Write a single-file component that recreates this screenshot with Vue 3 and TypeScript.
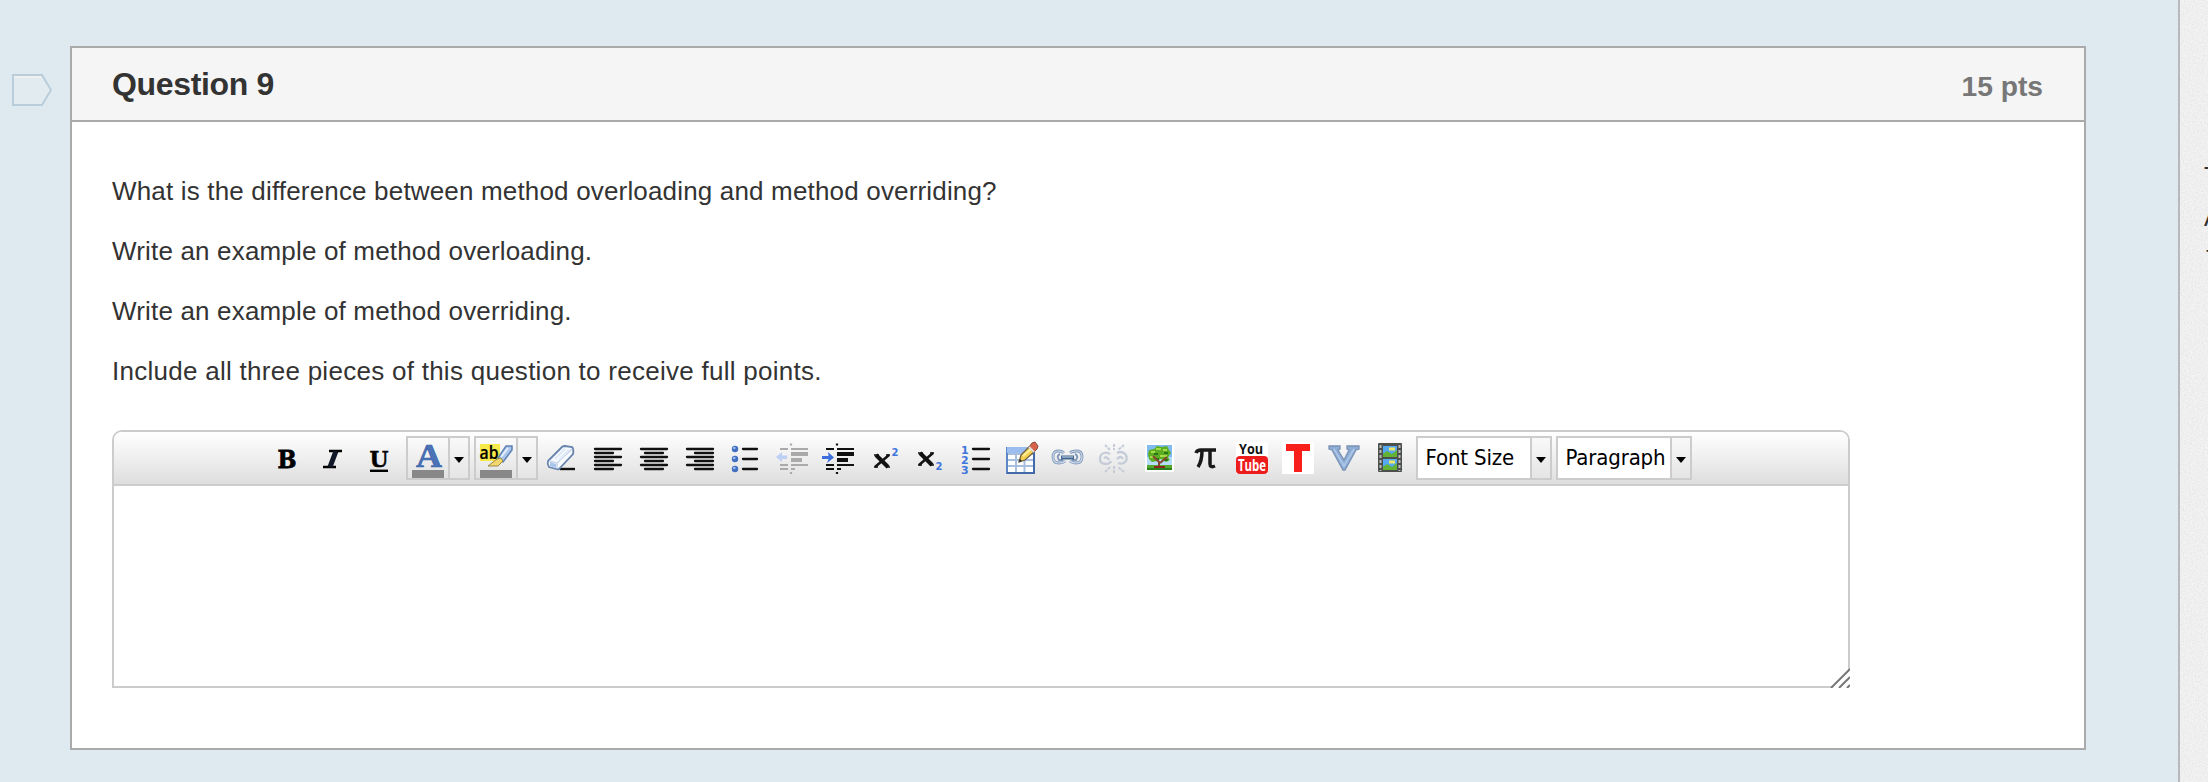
<script setup lang="ts">
const paragraphs: string[] = [
  'What is the difference between method overloading and method overriding?',
  'Write an example of method overloading.',
  'Write an example of method overriding.',
  'Include all three pieces of this question to receive full points.',
]
const lineY: number[] = [7, 11, 15, 19, 23, 27]
const listY: number[] = [7, 17, 27]
const alignments: { name: string; full: number; start: number }[] = [
  { name: 'left', full: 2, start: 2 },
  { name: 'center', full: 2, start: 6 },
  { name: 'right', full: 2, start: 10 },
]
</script>

<template>
  <div class="page">
    <main class="content">
      <svg class="flag" viewBox="0 0 42 34" aria-hidden="true">
        <path d="M2 2H31L40 17 31 32H2Z" fill="#e2ebf0" stroke="#b9cddb" stroke-width="2" />
        <path d="M3 4H30" stroke="#f1f0ee" stroke-width="2" />
      </svg>
      <section class="card">
        <header class="card-head">
          <h1><span>Question 9</span></h1>
          <span class="points">15 pts</span>
        </header>
        <div class="card-body">
          <p v-for="(text, i) in paragraphs" :key="i" :class="'line' + i">{{ text }}</p>
          <div class="editor">
            <div class="toolbar">
              <span class="cell"><svg viewBox="0 0 32 32"><text x="6.500" y="25.500" class="serif" font-size="24.500" textLength="19" lengthAdjust="spacingAndGlyphs" stroke="#000" stroke-width=".8">B</text></svg></span>
              <span class="cell"><svg viewBox="0 0 32 32"><path d="M12 9H25M6 25H19" stroke="#000" stroke-width="2.500" /><path d="M19 9 13 25" stroke="#111827" stroke-width="5" /></svg></span>
              <span class="cell"><svg viewBox="0 0 32 32"><text x="6.500" y="24.500" class="serif" font-size="23" textLength="19" lengthAdjust="spacingAndGlyphs" stroke="#000" stroke-width=".5">U</text><path d="M7 28.800H25" stroke="#000" stroke-width="2.400" /></svg></span>

              <span class="split first">
                <span class="swatch">
                  <svg viewBox="0 0 40 40">
                    <text x="8" y="28.500" class="serif-a" font-size="33" textLength="26" lengthAdjust="spacingAndGlyphs">A</text>
                    <rect x="4" y="32" width="32" height="8" fill="#888" />
                  </svg>
                </span>
                <span class="arrow"><i></i></span>
              </span>
              <span class="split">
                <span class="swatch">
                  <svg viewBox="0 0 40 40">
                    <rect x="4" y="6" width="20" height="17" fill="#f8e94a" />
                    <path d="M22 20 30 8 36 8 36 12 27 24Z" fill="#a9c5ea" stroke="#5f82b4" stroke-width="1.500" />
                    <path d="M25 19 32 10" stroke="#e4effb" stroke-width="2" />
                    <path d="M21 21 25 20 27 23 22 28 12 28Z" fill="#f2d66e" stroke="#9b8b45" />
                    <text x="3.500" y="20.500" font-size="18" class="sans" textLength="19" lengthAdjust="spacingAndGlyphs" stroke="#000" stroke-width=".2">ab</text>
                    <rect x="4" y="32" width="32" height="8" fill="#888" />
                  </svg>
                </span>
                <span class="arrow"><i></i></span>
              </span>

              <span class="cell after-split"><svg viewBox="0 0 32 32">
                <path d="M14 27H29" stroke="#111" stroke-width="2.400" />
                <path d="M2 19 16 5Q17 4 19 4L26 5Q28 7 27 12L14 26Q13 28 10 27L3 25Q1 22 2 19Z" fill="#f7faff" stroke="#6785ad" stroke-width="1.800" />
                <path d="M3 19 11 21 26 7M11 21V26" fill="none" stroke="#c7d5e8" stroke-width="1.500" />
                <path d="M9 17 19 7M13 18 23 8" stroke="#dfe9f7" stroke-width="2" />
                <path d="M4 20 10 22V26L4 24Z" fill="#a7c5ed" />
              </svg></span>
              <span v-for="a in alignments" :key="a.name" class="cell"><svg viewBox="0 0 32 32">
                <path v-for="(y, i) in lineY" :key="y" :d="i % 2 ? `M${a.start + 1} ${y}h18` : `M${a.full + 1} ${y}h26`" stroke="#111" stroke-width="2.300" stroke-linecap="round" />
              </svg></span>
              <span class="cell"><svg viewBox="0 0 32 32">
                <g v-for="y in listY" :key="y"><circle cx="5" :cy="y" r="3.200" fill="#426fc0" /><circle cx="4.300" :cy="y - 1" r="1.300" fill="#9bbcf0" /><path :d="`M13 ${y}h14`" stroke="#111" stroke-width="2.300" stroke-linecap="round" /></g>
              </svg></span>
              <span v-for="kind in ['outdent', 'indent']" :key="kind" class="cell"><svg viewBox="0 0 32 32" :class="kind">
                <path class="ink" d="M15 1.500v2M4 7h8M15 7h17M4 23h8M15 23h17M4 27h8M15 27h4M15 30v2" stroke-width="2.200" />
                <path class="ink" d="M15 12h17M15 18h11" stroke-width="4" />
                <path v-if="kind === 'outdent'" d="M0 15 6 10V13.500H11V17H6V20Z" fill="#bdd0f4" />
                <path v-else d="M12 15.500 6 10 6.500 14H0V17H6.500L5 21Z" fill="#3c6ee0" />
              </svg></span>
              <span class="cell"><svg viewBox="0 0 32 32">
                <path d="M8 13 20 25" stroke="#111" stroke-width="4" /><path d="M21 13 7 25" stroke="#111" stroke-width="2.500" /><path d="M6 13H11M18 13H22M6 25H10M18 25H22" stroke="#111" stroke-width="1.500" />
                <text x="23.500" y="13.500" class="digit" font-size="10">2</text>
              </svg></span>
              <span class="cell"><svg viewBox="0 0 32 32">
                <path d="M6 11 18 23" stroke="#111" stroke-width="4" /><path d="M19 11 5 23" stroke="#111" stroke-width="2.500" /><path d="M4 11H9M16 11H20M4 23H8M16 23H20" stroke="#111" stroke-width="1.500" />
                <text x="21.500" y="27.500" class="digit" font-size="10">2</text>
              </svg></span>
              <span class="cell"><svg viewBox="0 0 32 32">
                <g v-for="(y, i) in listY" :key="y"><text x="1" :y="y + 4.5" class="digit" font-size="11">{{ i + 1 }}</text><path :d="`M13 ${y}h16`" stroke="#111" stroke-width="2.300" stroke-linecap="round" /></g>
              </svg></span>
              <span class="cell"><svg viewBox="0 0 32 32">
                <rect x="1" y="6" width="27" height="25" fill="#fff" stroke="#5d86c6" stroke-width="2" />
                <path d="M1 5H28V11H1Z" fill="#9cbdf0" /><path d="M2 12H27M2 18H27M2 24H27M10 12V30M18.500 12V30" stroke="#a8bedf" stroke-width="2" /><path d="M1 31H28V8" fill="none" stroke="#426aaa" stroke-width="2" />
                <path d="M13 20 15 13 23 5 28 10 19 18Z" fill="#f4cf50" stroke="#6f6040" stroke-width="1.300" /><path d="M17 14 25 7" stroke="#fff098" stroke-width="2" />
                <path d="M23 5 26 1 29 0 32 4 31 7 28 10Z" fill="#d76348" stroke="#884c40" /><path d="M23 5 28 10" stroke="#ddd" stroke-width="2" /><path d="M13 20 14 17 16 19Z" fill="#222" />
              </svg></span>
              <span class="cell"><svg viewBox="0 0 32 32"><g fill="none">
                <path d="M12 11Q10 9 6 9 1 9 1 15T7 21Q11 21 13 19M18 11Q20 9 25 9 30 9 30 15T24 21Q20 21 18 19" stroke="#8099bb" stroke-width="2.800" />
                <path d="M12 11Q10 9 6 9 1 9 1 15T7 21Q11 21 13 19M18 11Q20 9 25 9 30 9 30 15T24 21Q20 21 18 19" stroke="#cbd8e8" stroke-width="1.200" />
                <path d="M8 12Q4 14 7 18H11M23 12Q27 14 24 18H20" stroke="#8099bb" stroke-width="2" /><path d="M9 15.500H22" stroke="#43658e" stroke-width="4" /><path d="M10 15H21" stroke="#b4c8df" stroke-width="1.200" />
              </g></svg></span>
              <span class="cell"><svg viewBox="0 0 32 32"><g fill="none" stroke="#c5ccd8" stroke-width="2.300">
                <path d="M12 12Q9 10 6 11 2 12 2 17T8 22Q12 22 13 19M19 11Q22 9 26 11 30 14 28 19 25 23 20 21" /><path d="M6 16Q9 14 11 18M19 17Q23 13 25 17" />
                <path d="M16 2V8M7 3 12 8M26 3 20 8M16 24V31M7 30 12 25M26 30 20 25" stroke-width="2" stroke-dasharray="3 1" />
              </g></svg></span>
              <span class="cell"><svg viewBox="0 0 32 32">
                <rect x="1" y="1" width="29" height="29" fill="#fff" /><rect x="3" y="3" width="25" height="25" fill="#80baf0" /><rect x="3" y="15" width="25" height="8" fill="#b5dcfa" /><rect x="3" y="23" width="25" height="5" fill="#55a82d" /><rect x="3" y="26" width="25" height="2" fill="#297f1c" />
                <path d="M5 8 10 7 13 4 18 5 23 4 25 8 27 11 24 15 26 18 22 20 17 17 13 19 8 20 5 17 4 12Z" fill="#5eae24" /><path d="M7 10h4M12 7h5M19 8h4M6 15h4M16 14h7" stroke="#a6dc45" stroke-width="2" /><path d="M10 12h4M20 11h4M11 17h4M20 18h4" stroke="#28791a" stroke-width="2" />
                <path d="M9 14 15 20V24M23 15 16 21" fill="none" stroke="#86452c" stroke-width="2" /><path d="M10 25H21" stroke="#8b271f" stroke-width="2" />
              </svg></span>
              <span class="cell"><svg viewBox="0 0 32 32"><path d="M6 11Q7 8 11 8H26M12 9Q12 19 8 25M20 9V22Q20 26 25 24" fill="none" stroke="#191919" stroke-width="3.500" /></svg></span>
              <span class="cell"><svg viewBox="0 0 32 32"><rect width="32" height="32" fill="#fff" /><rect y="14" width="32" height="18" rx="4" fill="#ed1c1c" /><text x="3" y="11.500" class="tube" font-size="15" textLength="24" lengthAdjust="spacingAndGlyphs">You</text><text x="2" y="28.500" class="tube light" font-size="16" textLength="28" lengthAdjust="spacingAndGlyphs">Tube</text></svg></span>
              <span class="cell"><svg viewBox="0 0 32 32"><rect width="32" height="32" fill="#fff" /><path d="M4 2H28V9H20V30H12V9H4Z" fill="#f9201b" /></svg></span>
              <span class="cell"><svg viewBox="0 0 32 32"><path d="M1 4H12V7L10 8 16 18 21 8 19 7V4H31V7L28 8 17 28H15L4 8 1 7Z" fill="#8faed6" stroke="#7892b5" stroke-width="1.300" /><path d="M6 7 16 24 26 7" fill="none" stroke="#aec8e9" stroke-width="1.500" /></svg></span>
              <span class="cell"><svg viewBox="0 0 32 32">
                <rect x="4" y="1" width="24" height="29" rx="1" fill="#4b504d" /><rect x="9" y="4" width="14" height="11" fill="#54a9f0" /><rect x="9" y="17" width="14" height="11" fill="#54a9f0" />
                <path d="M9 12 13 9 18 12 23 8V15H9ZM9 25 13 22 18 25 23 21V28H9Z" fill="#64b235" /><path d="M15 7h6M15 20h6" stroke="#eee66b" stroke-width="3" /><path d="M6.500 3V29M25.500 3V29" stroke="#bbb" stroke-width="2" stroke-dasharray="3 2" />
              </svg></span>
              <button class="select size" type="button"><span class="label"><span>Font Size</span></span><span class="arrow"><i></i></span></button>
              <button class="select format" type="button"><span class="label"><span>Paragraph</span></span><span class="arrow"><i></i></span></button>
            </div>
            <div class="writing">
              <svg class="grip" viewBox="0 0 20 20"><path d="M2 20 20 2V20Z" fill="#fff" /><path d="M1 20 20 1M9 20 20 9M17 20 20 17" stroke="#777" stroke-width="2" /></svg>
            </div>
          </div>
        </div>
      </section>
    </main>
    <aside class="side">
      <svg class="grain" aria-hidden="true"><filter id="paper"><feTurbulence type="fractalNoise" baseFrequency=".65" numOctaves="3" seed="4" /><feColorMatrix values="0 0 0 0 .4  0 0 0 0 .4  0 0 0 0 .4  .35 0 0 0 -.12" /></filter><rect width="100%" height="100%" filter="url(#paper)" /></svg>
      <div class="notes"><span class="note time">T</span><span class="note attempt">A</span><span class="note detail">T</span></div>
    </aside>
  </div>
</template>

<style>
body { margin: 0; background: #deeaf0; overflow: hidden; }
</style>

<style scoped>
* { box-sizing: border-box; }
.page { display: flex; width: 2208px; height: 782px; overflow: hidden; background: #deeaf0; font-family: "Liberation Sans", Arial, sans-serif; color: #333; }
.content { display: flex; align-items: flex-start; width: 2178px; padding: 46px 0 0 11px; }
.flag { width: 42px; height: 34px; margin: 27px 17px 0 0; flex: none; }
.card { width: 2016px; height: 704px; border: 2px solid #aaa; background: #fff; flex: none; }
.card-head { display: flex; align-items: center; justify-content: space-between; height: 74px; padding: 0 41px 0 40px; background: #f5f5f5; border-bottom: 2px solid #aaa; }
h1 { margin: 0; font-size: 32px; line-height: 40px; letter-spacing: -.35px; }
.points { font-size: 28.200px; font-weight: bold; color: #777; margin-top: 4px; }
.card-body { padding: 49px 40px 0; }
p { margin: 0 0 20px; font-size: 26px; line-height: 40px; white-space: nowrap; letter-spacing: .17px; }
.line3 { letter-spacing: .27px; }
.editor { width: 1738px; height: 258px; margin-top: 39px; border: 2px solid #ccc; border-radius: 10px 10px 0 0; }
.toolbar { display: flex; height: 54px; padding: 4px 0 0 150px; border-bottom: 2px solid #ccc; border-radius: 8px 8px 0 0; background: linear-gradient(#fff, #dedede); }
.cell { display: flex; justify-content: center; width: 46px; height: 44px; padding-top: 6px; flex: none; }
.cell svg { width: 32px; height: 32px; display: block; overflow: visible; }
.serif { font-family: "DejaVu Serif", serif; font-weight: bold; }
.serif-a { font-family: "Liberation Serif", serif; font-weight: bold; fill: #4c73b7; stroke: #315da6; stroke-width: .6; }
.sans { font-family: "Open Sans", sans-serif; font-weight: 600; }
.digit { font-family: "DejaVu Sans", sans-serif; font-weight: bold; fill: #3e75dc; }
.tube { font-family: "Open Sans", sans-serif; font-weight: bold; fill: #111; }
.light { fill: #fff; }
.ink { stroke: #111; fill: none; }
.outdent .ink { stroke: #aaa; }
.split { display: flex; width: 64px; height: 44px; margin-right: 4px; border: 2px solid #ccc; flex: none; }
.first { margin-left: 4px; }
.after-split { margin-left: -3px; }
.swatch, .swatch svg { display: block; width: 40px; height: 40px; flex: none; }
.arrow { display: flex; align-items: center; justify-content: center; width: 20px; flex: none; border-left: 2px solid #ccc; background: linear-gradient(#f9f9f9, #e5e5e5); }
.arrow i { width: 0; border: 5.500px solid transparent; border-top: 6px solid #000; border-bottom: 0; margin-top: 4px; }
.select { display: flex; width: 136px; height: 44px; margin: 0 0 0 3px; padding: 0; border: 2px solid #ccc; background: #fff; color: #000; font: 22px "DejaVu Sans Condensed", "Open Sans", sans-serif; }
.format { margin-left: 4px; }
.label { display: flex; align-items: center; width: 114px; height: 40px; padding-left: 7.500px; white-space: nowrap; flex: none; }
.label span { font-family: "DejaVu Sans", sans-serif; font-stretch: condensed; font-size: 22px; letter-spacing: -.15px; margin-top: -1px; }
.select .arrow { width: 20px; height: 40px; margin-left: -2px; width: 20px; }
.writing { display: flex; align-items: flex-end; justify-content: flex-end; height: 200px; }
.grip { width: 20px; height: 20px; margin: 0 -2px -2px 0; }
.side { position: relative; width: 30px; height: 782px; overflow: hidden; border-left: 2px solid #b7b9bf; background: #f3f3f3; }
.grain { position: absolute; inset: 0; width: 30px; height: 782px; }
.notes { position: relative; display: flex; flex-direction: column; padding: 162px 0 0 24px; font-size: 25px; }
.note { height: 41px; line-height: 28px; }
.detail { font-size: 22px; padding-left: 2px; }
</style>
